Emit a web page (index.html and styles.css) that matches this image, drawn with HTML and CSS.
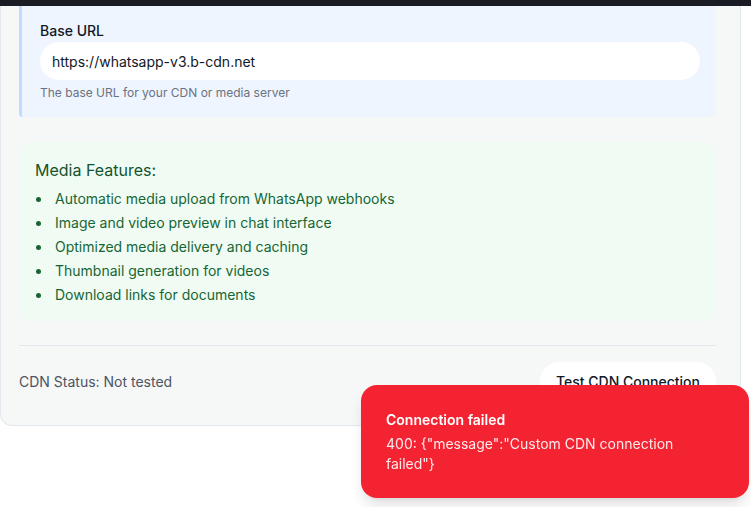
FILE: index.html
```html
<!DOCTYPE html>
<html lang="en">
<head>
<meta charset="utf-8">
<link rel="stylesheet" href="styles.css">
</head>
<body>
<div class="topbar"></div>
<div class="card">
  <div class="url-box">
    <label class="label">Base URL</label>
    <div class="input">https://whatsapp-v3.b-cdn.net</div>
    <p class="help">The base URL for your CDN or media server</p>
  </div>
  <div class="features">
    <h4 class="features-title">Media Features:</h4>
    <ul class="features-list">
      <li>Automatic media upload from WhatsApp webhooks</li>
      <li>Image and video preview in chat interface</li>
      <li>Optimized media delivery and caching</li>
      <li>Thumbnail generation for videos</li>
      <li>Download links for documents</li>
    </ul>
  </div>
  <div class="footer">
    <span class="status">CDN Status: Not tested</span>
    <button class="btn">Test CDN Connection</button>
  </div>
</div>
<div class="toast">
  <div class="toast-title">Connection failed</div>
  <div class="toast-desc">400: {"message":"Custom CDN connection failed"}</div>
</div>
</body>
</html>
```
FILE: styles.css
```css
* { box-sizing: border-box; }
html, body { margin: 0; padding: 0; background: #ffffff; }
body {
  font-family: Inter, "Noto Sans", sans-serif;
  color: #111827;
  width: 751px;
  height: 507px;
  overflow: hidden;
}
.topbar {
  height: 6px;
  background: #1a1c24;
}
.card {
  width: 741px;
  background: #f6f7f7;
  border: 1px solid #e3e8ee;
  border-top: none;
  border-radius: 0 0 12px 12px;
  padding: 0 24px 25px 18px;
}
.url-box {
  background: #eef5ff;
  border-left: 3px solid #bfdbfe;
  border-radius: 0 0 6px 4px;
  padding: 15px 16px 16px 18px;
  display: flex;
  flex-direction: column;
}
.label {
  font-size: 14px;
  line-height: 20px;
  font-weight: 500;
  color: #111827;
}
.input {
  margin-top: 1px;
  height: 38px;
  background: #ffffff;
  border-radius: 19px;
  padding: 0 12px;
  display: flex;
  align-items: center;
  font-size: 14px;
  color: #111827;
}
.help {
  margin: 5px 0 0;
  font-size: 12px;
  line-height: 16px;
  color: #6b7280;
}
.features {
  margin-top: 25px;
  background: #f0fcf3;
  border-radius: 14px;
  padding: 16px 16px 16px 16px;
}
.features-title {
  margin: 0;
  font-size: 16px;
  line-height: 24px;
  font-weight: 400;
  color: #14532d;
}
.features-list {
  list-style: none;
  margin: 7px 0 0;
  padding: 0;
  display: flex;
  flex-direction: column;
  gap: 4px;
}
.features-list li {
  position: relative;
  padding-left: 20px;
  font-size: 14px;
  line-height: 20px;
  color: #166534;
}
.features-list li::before {
  content: "";
  position: absolute;
  left: 1px;
  top: 8px;
  width: 5px;
  height: 5px;
  border-radius: 50%;
  background: #166534;
}
.footer {
  margin-top: 24px;
  border-top: 1px solid #e2e8ee;
  padding-top: 16px;
  display: flex;
  align-items: center;
  justify-content: space-between;
}
.status {
  font-size: 14px;
  color: #4b5563;
}
.btn {
  height: 38px;
  padding: 0 16px;
  border: none;
  border-radius: 19px;
  background: #ffffff;
  font-family: inherit;
  font-size: 14px;
  font-weight: 500;
  color: #111827;
}
.toast {
  position: fixed;
  left: 361px;
  top: 385px;
  width: 388px;
  height: 113px;
  background: #f42332;
  border-radius: 16px;
  box-shadow: 0 10px 15px -3px rgba(0,0,0,0.12), 0 4px 6px -4px rgba(0,0,0,0.1);
  padding: 25px 32px 24px 25px;
  color: #ffffff;
}
.toast-title {
  font-size: 14px;
  line-height: 20px;
  font-weight: 600;
}
.toast-desc {
  margin-top: 4px;
  font-size: 14px;
  line-height: 20px;
  opacity: 0.9;
}
```
